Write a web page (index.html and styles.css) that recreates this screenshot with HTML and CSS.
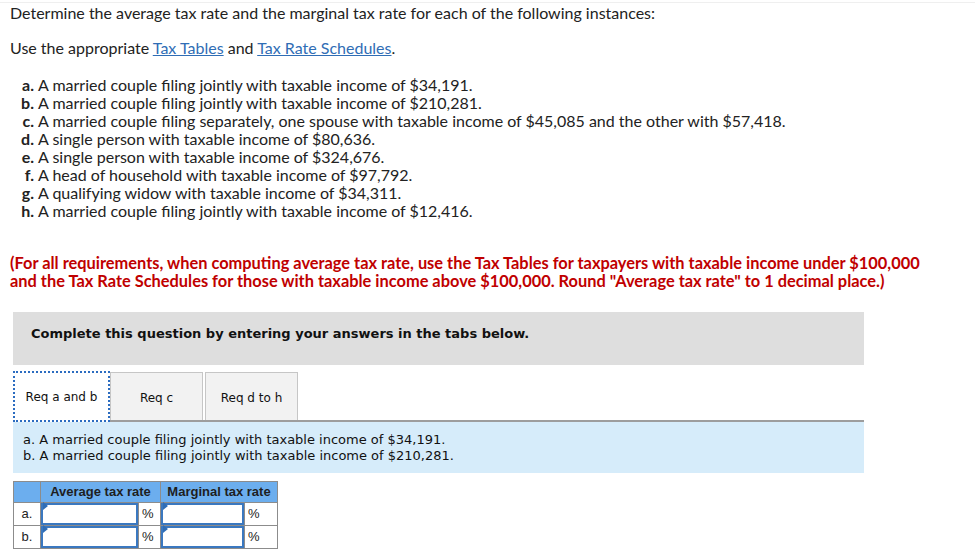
FILE: index.html
```html
<!DOCTYPE html>
<html>
<head>
<meta charset="utf-8">
<link rel="stylesheet" href="styles.css">
</head>
<body>
<div class="rule"></div>
<p class="intro">Determine the average tax rate and the marginal tax rate for each of the following instances:</p>
<p class="use">Use the appropriate <a href="#">Tax Tables</a> and <a href="#">Tax Rate Schedules</a>.</p>
<ul class="cases">
  <li><b>a.</b><span>A married couple filing jointly with taxable income of $34,191.</span></li>
  <li><b>b.</b><span>A married couple filing jointly with taxable income of $210,281.</span></li>
  <li><b>c.</b><span>A married couple filing separately, one spouse with taxable income of $45,085 and the other with $57,418.</span></li>
  <li><b>d.</b><span>A single person with taxable income of $80,636.</span></li>
  <li><b>e.</b><span>A single person with taxable income of $324,676.</span></li>
  <li><b>f.</b><span>A head of household with taxable income of $97,792.</span></li>
  <li><b>g.</b><span>A qualifying widow with taxable income of $34,311.</span></li>
  <li><b>h.</b><span>A married couple filing jointly with taxable income of $12,416.</span></li>
</ul>
<p class="note">(For all requirements, when computing average tax rate, use the Tax Tables for taxpayers with taxable income under $100,000 and the Tax Rate Schedules for those with taxable income above $100,000. Round "Average tax rate" to 1 decimal place.)</p>
<div class="widget">
  <div class="banner">Complete this question by entering your answers in the tabs below.</div>
  <div class="tabs">
    <div class="tab active">Req a and b</div>
    <div class="tab">Req c</div>
    <div class="tab third">Req d to h</div>
  </div>
  <div class="panel">
    <div>a. A married couple filing jointly with taxable income of $34,191.</div>
    <div>b. A married couple filing jointly with taxable income of $210,281.</div>
  </div>
  <table class="answers">
    <tr class="head">
      <th class="lbl"></th>
      <th colspan="2" class="avg">Average tax rate</th>
      <th colspan="2" class="marg">Marginal tax rate</th>
    </tr>
    <tr>
      <td class="lbl">a.</td>
      <td class="inp w1"><span class="flag"></span></td>
      <td class="pct">%</td>
      <td class="inp w2"><span class="flag"></span></td>
      <td class="pct p2">%</td>
    </tr>
    <tr>
      <td class="lbl">b.</td>
      <td class="inp w1"><span class="flag"></span></td>
      <td class="pct">%</td>
      <td class="inp w2"><span class="flag"></span></td>
      <td class="pct p2">%</td>
    </tr>
  </table>
</div>
</body>
</html>
```
FILE: styles.css
```css
html, body {
  margin: 0;
  padding: 0;
  background: #fff;
}
body {
  font-family: Lato, "Open Sans", sans-serif;
  font-size: 16px;
  line-height: 18px;
  color: #222;
  padding: 0 0 0 10px;
}
.rule {
  margin: 2px 0 0 -10px;
  border-top: 1px solid #efefef;
}
p {
  margin: 0;
}
.intro {
  margin-top: 1px;
}
.use {
  margin-top: 17px;
}
.use a {
  color: #2f6db5;
  text-decoration: underline;
}
.cases {
  list-style: none;
  margin: 19px 0 0;
  padding: 0;
}
.cases li {
  display: flex;
}
.cases li b {
  width: 28px;
  text-align: right;
  padding-right: 4px;
  box-sizing: border-box;
}
.note {
  margin-top: 34px;
  color: #c00000;
  font-weight: bold;
  font-size: 16.4px;
  max-width: 915px;
}
.widget {
  margin-left: 3px;
  width: 851px;
}
.banner {
  margin-top: 22px;
  background: #dedede;
  padding: 13px 18px 22px;
  font-family: "DejaVu Sans", Verdana, sans-serif;
  font-size: 13px;
  font-weight: bold;
  color: #111;
}
.tabs {
  margin-top: 6px;
  display: flex;
  align-items: flex-end;
  border-bottom: 2px solid #9d9d9d;
  font-family: "DejaVu Sans", Verdana, sans-serif;
  font-size: 12px;
  color: #111;
}
.tab {
  box-sizing: border-box;
  width: 93px;
  height: 48px;
  padding-top: 2px;
  display: flex;
  align-items: center;
  justify-content: center;
  background: #f2f2f2;
  border: 1px solid #c6c6c6;
  border-bottom: none;
}
.tab.active {
  width: 97px;
  height: 51px;
  background: #fff;
  border: 2px dotted #2b6cc0;
  margin-bottom: -2px;
  padding-top: 0;
}
.tab.third {
  margin-left: 2px;
}
.panel {
  background: #d6ecfa;
  padding: 10px 10px 9px;
  font-family: "DejaVu Sans", Verdana, sans-serif;
  font-size: 13px;
  line-height: 16px;
  color: #111;
}
.answers {
  margin-top: 8px;
  border-collapse: collapse;
  font-family: "Liberation Sans", Arial, sans-serif;
  font-size: 13px;
  color: #222;
}
.answers th, .answers td {
  border: 1px solid #8c8c8c;
  padding: 0;
}
.answers .head th {
  background: #6caeee;
  height: 20px;
  font-weight: bold;
  color: #1e1e1e;
}
.answers td {
  height: 22px;
}
.lbl {
  width: 26px;
  text-align: center;
}
.inp {
  position: relative;
  box-shadow: inset 0 0 0 2px #3a78c0;
}
.w1 {
  width: 97px;
}
.w2 {
  width: 83px;
}
.pct {
  width: 22px;
  text-align: left;
  padding-left: 3px !important;
  box-sizing: border-box;
}
.p2 {
  width: 33px;
}
.flag {
  position: absolute;
  left: 2px;
  top: 2px;
  width: 0;
  height: 0;
  border-top: 4px solid transparent;
  border-bottom: 4px solid transparent;
  border-left: 5px solid #2f6db5;
  transform: translateY(-3px);
}
```
